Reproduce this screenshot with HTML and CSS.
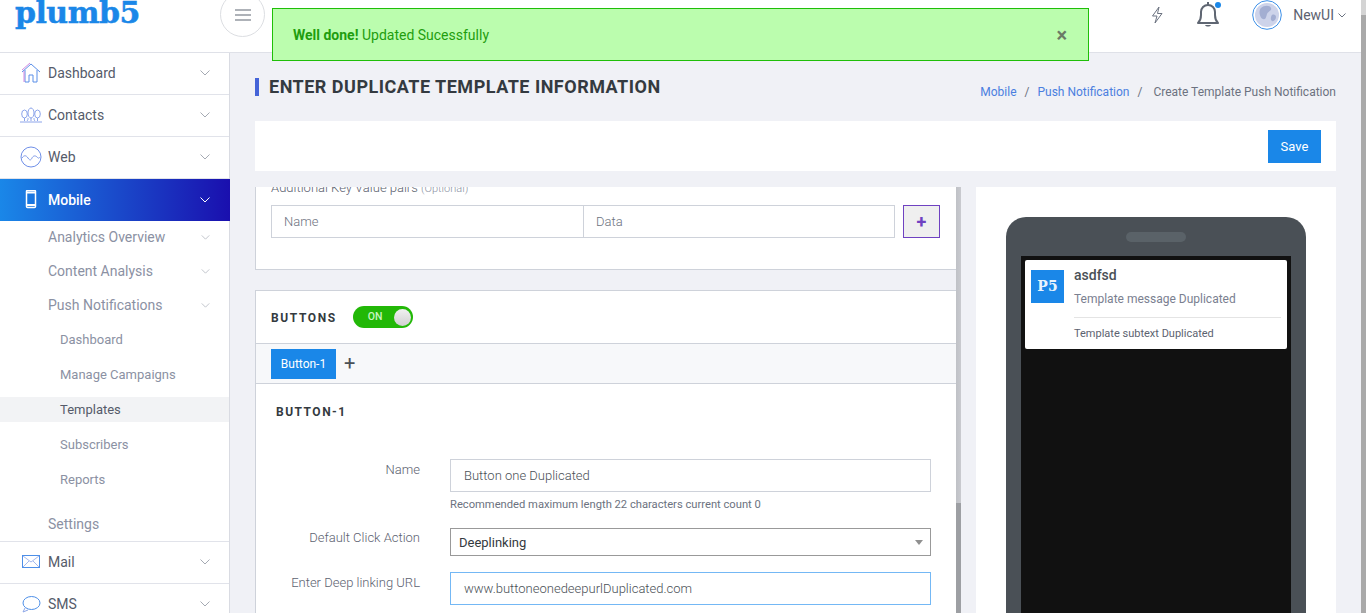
FILE: index.html
```html
<!DOCTYPE html>
<html lang="en">
<head>
<meta charset="utf-8">
<title>Plumb5</title>
<link rel="stylesheet" href="styles.css">
</head>
<body>
<div class="app">
  <div class="page">
    <header class="topbar">
      <div class="brand"><span class="logo">plumb5</span></div>
      <button class="burger"><svg width="16" height="12" viewBox="0 0 16 12"><path d="M0 1h16M0 6h16M0 11h16" stroke="#aeb2b8" stroke-width="2"/></svg></button>
      <div class="top-right">
        <svg class="bolt" width="12" height="18" viewBox="0 0 12 18" fill="none"><path d="M8 1 1.500 10H6l-2 7 7-9.500H6.500z" stroke="#6b7280" stroke-width="1"/></svg>
        <span class="bell">
          <svg width="24" height="27" viewBox="0 0 24 27" fill="none"><path d="M2 22c2-2 3-4 3-8V11c0-4 3-7 7-7s7 3 7 7v3c0 4 1 6 3 8z" stroke="#5f6672" stroke-width="2" stroke-linejoin="round"/><path d="M9 24c1 2 5 2 6 0z" fill="#5f6672"/><path d="M12 1v3" stroke="#5f6672" stroke-width="2"/></svg>
          <i class="dot"></i>
        </span>
        <span class="avatar"><svg width="30" height="30" viewBox="0 0 30 30"><circle cx="15" cy="15" r="14.300" fill="#fff" stroke="#3b8fe8"/><circle cx="15" cy="15" r="12" fill="#cdd3ea"/><path d="M9 8c3-3 9-3 10 0s-3 3-4 6-1 6-4 5-5-8-2-11zM20 15c2-1 4 0 4 2s-2 5-4 4-1-5 0-6z" fill="#a3aed2"/></svg></span>
        <span class="user">NewUI</span>
        <svg class="user-chev" width="8" height="5" viewBox="0 0 8 5" fill="none"><path d="M.5.5 4 4 7.500.5" stroke="#6b7280"/></svg>
      </div>
    </header>
    <div class="body-row">
      <nav class="sidebar">
        <a class="nav-row">
          <svg class="nav-ico" width="22" height="22" viewBox="0 0 22 22" fill="none"><path d="M2 10 11 2l9 8M5 8v12h4v-7h4v7h4V8" stroke="#5b8fe8"/><path d="M2 8l8-7M4 9v11" stroke="#d58be0"/></svg>
          <span>Dashboard</span><svg class="chev" width="10" height="6" viewBox="0 0 10 6" fill="none"><path d="M.5.5 5 5 9.500.5" stroke="#a5aab3"/></svg>
        </a>
        <a class="nav-row">
          <svg class="nav-ico" width="22" height="22" viewBox="0 0 22 22" fill="none"><g stroke="#7f9ae8" stroke-width=".9"><ellipse cx="4.500" cy="10" rx="2.800" ry="4"/><ellipse cx="11" cy="9" rx="3" ry="5"/><ellipse cx="17.500" cy="10" rx="2.800" ry="4"/><path d="M4.500 14v3M11 14v3M17.500 14v3M0 18h22M7 17c1-1 1-2 1-3M15 17c-1-1-1-2-1-3"/></g></svg>
          <span>Contacts</span><svg class="chev" width="10" height="6" viewBox="0 0 10 6" fill="none"><path d="M.5.5 5 5 9.500.5" stroke="#a5aab3"/></svg>
        </a>
        <a class="nav-row">
          <svg class="nav-ico" width="22" height="22" viewBox="0 0 22 22" fill="none"><circle cx="11" cy="11" r="10" stroke="#6f8fe8"/><path d="M2 12c2-3 4-3 6 0s3 2 4 0 3-3 5-1 2 1 3 0" stroke="#7f9ae8"/></svg>
          <span>Web</span><svg class="chev" width="10" height="6" viewBox="0 0 10 6" fill="none"><path d="M.5.5 5 5 9.500.5" stroke="#a5aab3"/></svg>
        </a>
        <a class="nav-row nav-active">
          <svg class="nav-ico" width="22" height="20" viewBox="0 0 22 20" fill="none"><rect x="6.500" y=".5" width="9" height="17" rx="1" stroke="#fff" stroke-width="1.500"/><path d="M6 2.500h10M6 15h10" stroke="#fff" stroke-width="2"/></svg>
          <span>Mobile</span><svg class="chev" width="10" height="6" viewBox="0 0 10 6" fill="none"><path d="M.5.5 5 5 9.500.5" stroke="#fff"/></svg>
        </a>
        <div class="subnav">
          <a class="sub-row"><span>Analytics Overview</span><svg class="chev" width="9" height="5" viewBox="0 0 10 6" fill="none"><path d="M.5.5 5 5 9.500.5" stroke="#b5b9c2"/></svg></a>
          <a class="sub-row"><span>Content Analysis</span><svg class="chev" width="9" height="5" viewBox="0 0 10 6" fill="none"><path d="M.5.5 5 5 9.500.5" stroke="#b5b9c2"/></svg></a>
          <a class="sub-row"><span>Push Notifications</span><svg class="chev" width="9" height="5" viewBox="0 0 10 6" fill="none"><path d="M.5.5 5 5 9.500.5" stroke="#b5b9c2"/></svg></a>
          <div class="subsub">
            <a class="leaf">Dashboard</a>
            <a class="leaf">Manage Campaigns</a>
            <a class="leaf leaf-active">Templates</a>
            <a class="leaf">Subscribers</a>
            <a class="leaf">Reports</a>
          </div>
          <a class="sub-row"><span>Settings</span></a>
        </div>
        <a class="nav-row nav-topline">
          <svg class="nav-ico" width="22" height="14" viewBox="0 0 22 14" fill="none"><rect x="2.500" y=".5" width="17" height="12" stroke="#4d8fe8"/><path d="M3 1l8 6 8-6M3 12l6-6M19 12l-6-6" stroke="#8fa8e8" stroke-width=".8"/></svg>
          <span>Mail</span><svg class="chev" width="10" height="6" viewBox="0 0 10 6" fill="none"><path d="M.5.5 5 5 9.500.5" stroke="#a5aab3"/></svg>
        </a>
        <a class="nav-row">
          <svg class="nav-ico" width="22" height="18" viewBox="0 0 22 18" fill="none"><ellipse cx="11.500" cy="8" rx="8.500" ry="6.500" stroke="#4d8fe8"/><path d="M5 13l-2 4 5-2" stroke="#8fa8e8"/></svg>
          <span>SMS</span><svg class="chev" width="10" height="6" viewBox="0 0 10 6" fill="none"><path d="M.5.5 5 5 9.500.5" stroke="#a5aab3"/></svg>
        </a>
      </nav>
      <main class="main">
        <div class="title-row">
          <h1 class="page-title">ENTER DUPLICATE TEMPLATE INFORMATION</h1>
          <div class="crumbs"><a>Mobile</a><i>/</i><a>Push Notification</a><i>/</i><span class="crumb-now">Create Template Push Notification</span></div>
        </div>
        <div class="save-bar"><button class="btn-save">Save</button></div>
        <div class="columns">
          <div class="left-col">
            <div class="scroller">
              <section class="card card-kv">
                <p class="kv-label">Additional Key Value pairs <small>(Optional)</small></p>
                <div class="kv-row">
                  <div class="kv-group"><span class="kv-cell">Name</span><span class="kv-cell kv-cell-b">Data</span></div>
                  <button class="kv-add">+</button>
                </div>
              </section>
              <section class="card card-buttons">
                <div class="btn-head">
                  <h2 class="section-title">BUTTONS</h2>
                  <div class="toggle"><span>ON</span><i></i></div>
                </div>
                <div class="tabs"><span class="tab">Button-1</span><span class="tab-add">+</span></div>
                <h3 class="sub-title">BUTTON-1</h3>
                <div class="form-row form-row-name">
                  <label>Name</label>
                  <div class="field"><div class="input">Button one Duplicated</div><p class="hint">Recommended maximum length 22 characters current count 0</p></div>
                </div>
                <div class="form-row form-row-select">
                  <label>Default Click Action</label>
                  <div class="field"><div class="select">Deeplinking<i class="caret"></i></div></div>
                </div>
                <div class="form-row form-row-url">
                  <label>Enter Deep linking URL</label>
                  <div class="field"><div class="input input-focus">www.buttoneonedeepurlDuplicated.com</div></div>
                </div>
              </section>
            </div>
            <div class="inner-bar"></div>
          </div>
          <aside class="preview">
            <div class="phone">
              <div class="speaker"></div>
              <div class="screen">
                <div class="notif">
                  <div class="notif-icon">P5</div>
                  <div class="notif-body">
                    <div class="notif-title">asdfsd</div>
                    <div class="notif-msg">Template message Duplicated</div>
                    <div class="notif-sub">Template subtext Duplicated</div>
                  </div>
                </div>
              </div>
            </div>
          </aside>
        </div>
      </main>
    </div>
  </div>
  <div class="page-bar"></div>
  <div class="alert"><span><b>Well done!</b> Updated Sucessfully</span><span class="alert-x">×</span></div>
</div>
</body>
</html>
```
FILE: styles.css
```css
* { box-sizing: border-box; }
html, body { margin: 0; height: 100%; overflow: hidden; }
body { font-family: Roboto, "Liberation Sans", sans-serif; background: #fff; color: #343a40; }
.app { display: flex; height: 613px; position: relative; overflow: hidden; }
.page { width: 1361px; display: flex; flex-direction: column; }
.page-bar { width: 5px; background: linear-gradient(#d4d4d4 0 15px, #a9a9a9 15px); }

.topbar { height: 53px; flex: none; background: #fff; border-bottom: 1px solid #dfe1e8; display: flex; position: relative; }
.brand { width: 220px; height: 52px; padding-left: 15px; }
.logo { display: block; font: 700 30px/25px "DejaVu Serif", serif; letter-spacing: -.5px; color: #1a87e8; -webkit-text-stroke: .5px #1a87e8; }
.burger { width: 45px; height: 45px; margin-top: -8px; border: 1px solid #dcdee2; border-radius: 50%; background: #fff; padding: 0; display: flex; align-items: center; justify-content: center; }
.top-right { margin-left: auto; display: flex; align-items: flex-start; height: 30px; }
.bolt { margin-top: 6px; }
.bell { position: relative; width: 24px; height: 27px; margin-left: 33px; margin-top: 1px; }
.dot { position: absolute; top: 1px; right: -1px; width: 6px; height: 6px; background: #1a87e8; border-radius: 50%; }
.avatar { width: 30px; height: 30px; margin-left: 32px; }
.user { font-size: 14px; line-height: 30px; margin-left: 11px; color: #5c6270; }
.user-chev { margin: 13px 15px 0 4px; }

.body-row { flex: 1; display: flex; min-height: 0; }
.sidebar { width: 230px; flex: none; background: #fff; box-shadow: inset -1px 0 #d9dbe2; overflow: hidden; }
.nav-row { height: 42px; display: flex; align-items: center; padding: 0 19px 2px 20px; margin-right: 1px; border-bottom: 1px solid #e1e3ea; font-size: 14px; color: #555b6a; }
.nav-row > span { flex: 1; }
.nav-ico { width: 22px; margin-right: 6px; flex: none; }
.chev { flex: none; }
.nav-active { background: linear-gradient(90deg, #1a87e8, #1a0fae); color: #fff; font-weight: 500; border-bottom: 0; padding: 0 20px; margin-right: 0; }
.subnav { height: 321px; margin-top: -1px; margin-right: 1px; }
.sub-row { height: 34px; display: flex; align-items: center; padding: 0 19px 0 48px; font-size: 14px; color: #8b91a3; }
.sub-row > span { flex: 1; }
.subsub { padding: 5px 0 15px; display: flex; flex-direction: column; gap: 10px; }
.leaf { height: 25px; line-height: 25px; padding-left: 60px; font-size: 13px; color: #8b91a3; }
.leaf-active { background: #f2f3f5; color: #555b6a; }
.nav-topline { border-top: 1px solid #e1e3ea; height: 43px; }

.main { flex: 1; min-width: 0; background: #f0f1f6; padding-left: 25px; padding-right: 25px; display: flex; flex-direction: column; }
.title-row { height: 68px; flex: none; display: flex; align-items: flex-start; justify-content: space-between; }
.page-title { margin: 25px 0 0; height: 18px; border-left: 4px solid #4564d8; padding-left: 10px; font-size: 18px; line-height: 18px; font-weight: 700; letter-spacing: .5px; color: #343a40; }
.crumbs { margin-top: 32px; font-size: 12px; line-height: 14px; color: #6c7280; }
.crumbs a { color: #4b7fe0; }
.crumbs i { font-style: normal; margin: 0 8px; }
.crumb-now { margin-left: 3px; }
.save-bar { height: 50px; flex: none; background: #fff; display: flex; justify-content: flex-end; align-items: flex-start; padding: 9px 15px 0 0; }
.btn-save { width: 53px; height: 33px; background: #1a87e8; color: #fff; border: 0; font: 13px Roboto, sans-serif; }
.columns { flex: 1; min-height: 0; margin-top: 16px; display: flex; justify-content: space-between; }

.left-col { width: 706px; display: flex; overflow: hidden; }
.scroller { width: 702px; flex: none; overflow: hidden; margin-right: -1px; }
.inner-bar { width: 5px; flex: none; background: linear-gradient(90deg, #bfc1c6, #c9cacf) top / 100% 316px no-repeat, #9d9fa3; }
.card { background: #fff; border: 1px solid #ced2da; }
.card-kv { margin-top: -20px; height: 103px; padding: 13px 16px 0 15px; }
.kv-label { margin: 0 0 9px; font-size: 13px; font-weight: 300; line-height: 14px; color: #5c6270; }
.kv-label small { font-size: 11px; color: #8b91a3; }
.kv-row { display: flex; justify-content: space-between; }
.kv-group { width: 624px; height: 33px; border: 1px solid #ced2da; display: flex; }
.kv-cell { width: 311px; flex: none; padding-left: 12px; font-size: 13px; font-weight: 300; line-height: 31px; color: #6c7280; }
.kv-cell-b { border-left: 1px solid #ced2da; }
.kv-add { width: 37px; height: 33px; border: 1px solid #6f42c1; background: #efefef; color: #6f42c1; padding: 0; font: 700 18px/28px Roboto, sans-serif; }
.card-buttons { margin-top: 20px; height: 400px; border-bottom: 0; }
.btn-head { height: 53px; display: flex; align-items: center; padding-left: 15px; border-bottom: 1px solid #ced2da; }
.section-title { margin: 2px 0 0; font-size: 12px; font-weight: 700; letter-spacing: 1.6px; color: #343a40; }
.toggle { width: 60px; height: 22px; margin-left: 16px; border-radius: 11px; background: #22b807; display: flex; align-items: center; justify-content: space-between; padding: 0 2px 0 15px; color: #c9f5c0; font-size: 10.500px; font-weight: 500; }
.toggle span { margin-top: -2px; }
.toggle i { width: 17px; height: 17px; border-radius: 50%; background: linear-gradient(#f1f1f1, #d0d0d0); }
.tabs { height: 40px; background: #f7f8fa; border-bottom: 1px solid #ced2da; padding: 5px 0 0 15px; display: flex; align-items: flex-start; }
.tab { width: 65px; height: 30px; background: #1a87e8; color: #fff; font-size: 12px; line-height: 30px; text-align: center; }
.tab-add { margin-left: 8px; font-size: 20px; font-weight: 400; line-height: 28px; color: #4a5056; }
.sub-title { margin: 0; padding: 21px 0 0 20px; height: 75px; font-size: 12px; line-height: 14px; font-weight: 700; letter-spacing: 1.5px; color: #343a40; }
.form-row { display: flex; }
.form-row label { width: 164px; text-align: right; font-size: 13px; font-weight: 300; line-height: 22px; color: #5c6270; flex: none; }
.field { width: 481px; margin-left: 30px; flex: none; }
.form-row-name { height: 69px; }
.form-row-select { height: 44px; }
.form-row-select label { line-height: 20px; }
.input { height: 33px; border: 1px solid #ced2da; padding-left: 13px; font-size: 13px; font-weight: 300; line-height: 31px; color: #4a5056; }
.input-focus { border-color: #74b8f5; }
.hint { margin: 6px 0 0; font-size: 11.200px; line-height: 13px; color: #6c7280; }
.select { height: 28px; border: 1px solid #999; padding-left: 8px; font-size: 13px; line-height: 27px; color: #343a40; position: relative; }
.caret { position: absolute; right: 7px; top: 11px; border: 4px solid transparent; border-top: 5px solid #909090; border-bottom: 0; }

.preview { width: 360px; background: #fff; padding: 30px 30px 0; overflow: hidden; }
.phone { height: 500px; background: #4a5056; border-radius: 20px 20px 0 0; padding: 15px 15px 0; }
.speaker { width: 60px; height: 10px; margin: 0 auto 14px; background: #5a6268; border-radius: 5px; }
.screen { height: 400px; background: #111; padding: 4px; }
.notif { height: 89px; background: #fff; border-radius: 2px; display: flex; padding: 10px 6px 0; }
.notif-icon { width: 33px; height: 33px; background: #1a87e8; color: #e8f3fd; font: 700 14px/33px "DejaVu Serif", serif; text-align: center; flex: none; }
.notif-body { flex: 1; margin-left: 10px; }
.notif-title { font-size: 14px; line-height: 10px; font-weight: 500; color: #4a5056; }
.notif-msg { margin-top: 12px; font-size: 12px; line-height: 14px; color: #7a8090; }
.notif-sub { margin-top: 11px; padding-top: 9px; border-top: 1px solid #e4e4e4; font-size: 11px; line-height: 13px; color: #5c6270; }

.alert { position: absolute; left: 272px; top: 8px; width: 817px; height: 53px; background: #bbfdae; border: 1px solid #1fbf08; display: flex; align-items: center; justify-content: space-between; padding: 0 21px 0 20px; font-size: 14px; color: #1f9e0e; }
.alert b { font-weight: 700; }
.alert-x { font-size: 20px; font-weight: 700; color: #6b7a66; line-height: 20px; }
```
